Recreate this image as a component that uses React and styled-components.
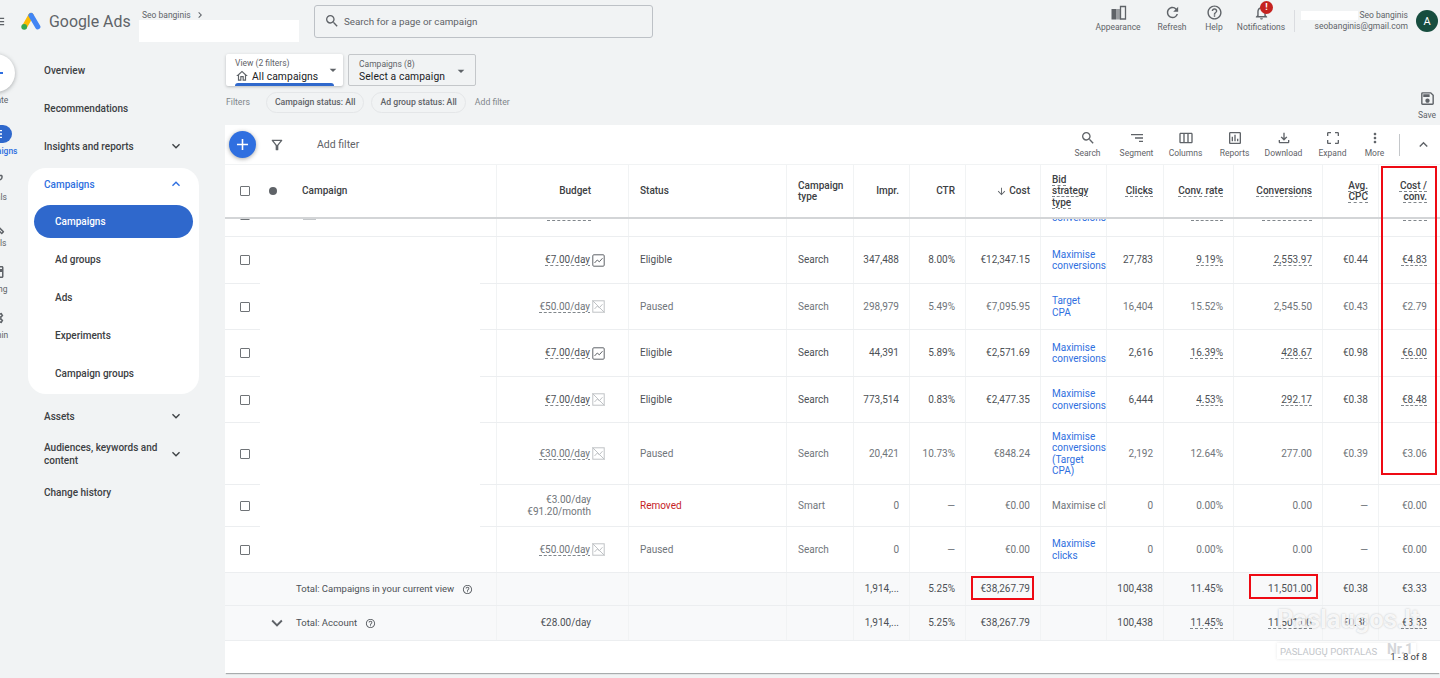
import React from 'react';
import styled, { createGlobalStyle } from 'styled-components';
import {
  MdMenu, MdChevronRight, MdSearch, MdRefresh, MdHelpOutline, MdOutlineNotifications, MdOutlineSave,
  MdOutlineFileDownload, MdMoreVert, MdOutlineCropFree, MdOutlineViewWeek, MdOutlineAssessment, MdSort,
  MdExpandMore, MdExpandLess, MdAdd, MdArrowDownward, MdOutlineHome, MdArrowDropDown, MdOutlineFilterAlt,
  MdOutlineEmojiEvents, MdOutlineBuild, MdOutlineCreditCard, MdOutlineSettings,
} from 'react-icons/md';

const GlobalStyle = createGlobalStyle`
  html, body { margin: 0; padding: 0; height: 100%; background: #f1f3f4; }
  body { font-family: Roboto, "Liberation Sans", sans-serif; color: #3c4043; overflow: hidden; }
  * { box-sizing: border-box; }
`;

const COLUMNS = '272px 132px 158px 67px 56px 56px 75px 66px 57px 70px 89px 56px 61px';

const rows = [
  { h: 47, budget: '€7.00/day', trend: true, status: 'Eligible', imp: '347,488', ctr: '8.00%', cost: '€12,347.15', bid: ['Maximise', 'conversions'], clicks: '27,783', rate: '9.19%', conv: '2,553.97', cpc: '€0.44', cc: '€4.83', dashed: true },
  { h: 46, budget: '€50.00/day', status: 'Paused', muted: true, imp: '298,979', ctr: '5.49%', cost: '€7,095.95', bid: ['Target', 'CPA'], clicks: '16,404', rate: '15.52%', conv: '2,545.50', cpc: '€0.43', cc: '€2.79' },
  { h: 47, budget: '€7.00/day', trend: true, status: 'Eligible', imp: '44,391', ctr: '5.89%', cost: '€2,571.69', bid: ['Maximise', 'conversions'], clicks: '2,616', rate: '16.39%', conv: '428.67', cpc: '€0.98', cc: '€6.00', dashed: true },
  { h: 46, budget: '€7.00/day', status: 'Eligible', imp: '773,514', ctr: '0.83%', cost: '€2,477.35', bid: ['Maximise', 'conversions'], clicks: '6,444', rate: '4.53%', conv: '292.17', cpc: '€0.38', cc: '€8.48', dashed: true },
  { h: 62, budget: '€30.00/day', status: 'Paused', muted: true, imp: '20,421', ctr: '10.73%', cost: '€848.24', bid: ['Maximise', 'conversions', '(Target', 'CPA)'], clicks: '2,192', rate: '12.64%', conv: '277.00', cpc: '€0.39', cc: '€3.06' },
  { h: 42, smart: true, status: 'Removed', muted: true, type: 'Smart', imp: '0', ctr: '—', cost: '€0.00', plainBid: 'Maximise clicks', clicks: '0', rate: '0.00%', conv: '0.00', cpc: '—', cc: '€0.00' },
  { h: 46, budget: '€50.00/day', status: 'Paused', muted: true, last: true, imp: '0', ctr: '—', cost: '€0.00', bid: ['Maximise', 'clicks'], clicks: '0', rate: '0.00%', conv: '0.00', cpc: '—', cc: '€0.00' },
];

const Page = styled.div`
  width: 1440px;
  height: 678px;
  overflow: hidden;
  display: flex;
  flex-direction: column;
`;

const TopBar = styled.header`
  height: 42px;
  flex: none;
  display: flex;
  align-items: center;
`;

const Burger = styled.div`
  width: 21px;
  display: flex;
  justify-content: flex-end;
  overflow: hidden;
  color: #5f6368;
  font-size: 15px;
  svg { flex: none; margin-right: 15px; }
`;

const Brand = styled.div`
  font-size: 15.9px;
  color: #5f6368;
  margin-left: 8px;
  width: 90px;
  white-space: nowrap;
`;

const AccountCrumb = styled.div`
  width: 175px;
  height: 42px;
  padding-top: 10px;
  font-size: 8.5px;
  color: #5f6368;
  display: flex;
  flex-direction: column;
`;

const CrumbName = styled.div`
  display: flex;
  align-items: center;
  gap: 3px;
  padding-left: 3px;
  height: 10px;
`;

const Redacted = styled.div`
  background: #fff;
  width: ${(p) => p.$w}px;
  height: ${(p) => p.$h}px;
  flex: none;
`;

const SearchBox = styled.div`
  width: 339px;
  height: 33px;
  border: 1px solid #bdc1c6;
  border-radius: 3px;
  display: flex;
  align-items: center;
  gap: 4px;
  padding-left: 9px;
  font-size: 9.8px;
  color: #5f6368;
  svg { font-size: 16px; }
`;

const TopActions = styled.div`
  margin-left: auto;
  display: flex;
  align-items: center;
  height: 42px;
`;

const TopAction = styled.div`
  width: ${(p) => p.$w}px;
  display: flex;
  flex-direction: column;
  align-items: center;
  font-size: 8.5px;
  color: #5f6368;
  gap: 1px;
  position: relative;
  margin-bottom: 6px;
  white-space: nowrap;
  svg { font-size: 17px; display: block; }
`;

const AlertBadge = styled.span`
  position: absolute;
  top: -3px;
  left: 26px;
  width: 13px;
  height: 13px;
  border-radius: 50%;
  background: #c5221f;
  color: #fff;
  font-size: 9px;
  font-weight: 700;
  text-align: center;
  line-height: 13px;
`;

const TopDivider = styled.div`
  width: 1px;
  height: 22px;
  background: #dadce0;
  margin-left: 6px;
`;

const UserBlock = styled.div`
  width: 113px;
  font-size: 8.5px;
  color: #5f6368;
  text-align: right;
  line-height: 11px;
`;

const UserLine = styled.div`
  display: flex;
  justify-content: flex-end;
  align-items: center;
  gap: 1px;
`;

const Avatar = styled.div`
  width: 22px;
  height: 22px;
  border-radius: 50%;
  background: #174d3f;
  color: #fff;
  font-size: 11px;
  display: flex;
  align-items: center;
  justify-content: center;
  margin: 0 2px 0 8px;
`;

const Body = styled.div`
  flex: 1;
  display: flex;
  min-height: 0;
`;

const Rail = styled.nav`
  width: 28px;
  flex: none;
  overflow: hidden;
  display: flex;
  flex-direction: column;
`;

const RailColumn = styled.div`
  width: 60px;
  margin-left: -34px;
  display: flex;
  flex-direction: column;
  align-items: center;
  padding-top: 12px;
`;

const CreateCircle = styled.div`
  width: 38px;
  height: 38px;
  border-radius: 50%;
  background: #fff;
  box-shadow: 0 1px 4px rgba(60, 64, 67, 0.4);
  color: #2f6fe0;
  font-size: 24px;
  display: flex;
  align-items: center;
  justify-content: center;
`;

const RailLabel = styled.div`
  font-size: 8.5px;
  font-weight: ${(p) => (p.$active ? 500 : 400)};
  color: ${(p) => (p.$active ? '#2f6fe0' : '#5f6368')};
  line-height: 10px;
  margin-top: 3px;
  white-space: nowrap;
`;

const RailItem = styled.div`
  height: 46px;
  display: flex;
  flex-direction: column;
  align-items: center;
  color: #5f6368;
  font-size: 18px;
  svg { display: block; }
`;

const RailPill = styled.div`
  width: 32px;
  height: 18px;
  border-radius: 9px;
  background: #2f68cc;
  color: #fff;
  font-size: 16px;
  display: flex;
  align-items: center;
  justify-content: center;
`;

const CreateItem = styled.div`
  height: 71px;
  display: flex;
  flex-direction: column;
  align-items: center;
`;

const SideNav = styled.nav`
  width: 171px;
  flex: none;
  padding-top: 9px;
`;

const NavItem = styled.div`
  height: 38px;
  display: flex;
  align-items: center;
  justify-content: space-between;
  padding: 0 15px 0 16px;
  font-size: 10px;
  font-weight: 500;
  line-height: 13px;
  color: #3c4043;
  svg { font-size: 16px; flex: none; color: #3c4043; }
`;

const NavCard = styled.div`
  background: #fff;
  border-radius: 18px;
  margin: 3px 0;
  padding: 0 6px;
  height: 226px;
`;

const NavCardHead = styled.div`
  height: 32px;
  display: flex;
  align-items: center;
  justify-content: space-between;
  padding: 0 9px 0 10px;
  font-size: 10px;
  font-weight: 500;
  color: #2f6fe0;
  svg { font-size: 16px; }
`;

const NavPill = styled.div`
  height: 33px;
  margin-top: 5px;
  margin-bottom: 2px;
  border-radius: 17px;
  background: #2f68cc;
  color: #fff;
  font-size: 10px;
  font-weight: 500;
  display: flex;
  align-items: center;
  padding-left: 21px;
`;

const NavSub = styled.div`
  height: 38px;
  display: flex;
  align-items: center;
  padding-left: 21px;
  font-size: 10px;
  font-weight: 500;
  color: #3c4043;
`;

const Main = styled.main`
  width: 1215px;
  margin-left: 26px;
  flex: none;
  position: relative;
  padding-top: 12px;
`;

const SelectorRow = styled.div`
  display: flex;
  gap: 5px;
  height: 32px;
`;

const Selector = styled.div`
  position: relative;
  width: ${(p) => p.$w}px;
  margin-left: ${(p) => p.$ml || 0}px;
  height: 32px;
  border-radius: 2px;
  padding: 4px 0 0 ${(p) => p.$pl}px;
  background: ${(p) => (p.$raised ? '#fff' : '#f1f3f4')};
  border: ${(p) => (p.$raised ? 'none' : '1px solid #c4c7ca')};
  box-shadow: ${(p) => (p.$raised ? '0 1px 3px rgba(60, 64, 67, 0.3)' : 'none')};
`;

const SelectorLabel = styled.div`
  font-size: 8.5px;
  color: #5f6368;
  line-height: 10px;
`;

const SelectorValue = styled.div`
  font-size: 10.3px;
  color: #202124;
  line-height: 13px;
  margin-top: 1px;
  display: flex;
  align-items: center;
  gap: 3px;
  letter-spacing: 0.1px;
  svg { font-size: 14px; color: #5f6368; }
`;

const SelectorArrow = styled.div`
  position: absolute;
  right: ${(p) => p.$r}px;
  top: 8px;
  font-size: 16px;
  color: #5f6368;
  svg { display: block; }
`;

const ActiveBar = styled.div`
  position: absolute;
  left: 9px;
  right: 9px;
  bottom: 0;
  height: 3px;
  border-radius: 3px 3px 0 0;
  background: #2f68cc;
`;

const FilterRow = styled.div`
  height: 39px;
  padding: 6px 0 0 1px;
  display: flex;
  align-items: flex-start;
  font-size: 8.7px;
  color: #80868b;
`;

const FilterLabel = styled.span`
  line-height: 21px;
  margin-right: 16px;
`;

const Chip = styled.span`
  height: 21px;
  line-height: 19px;
  padding: 0 8px;
  border: 1px solid #e4e6e8;
  border-radius: 11px;
  font-weight: 500;
  color: #5f6368;
  margin-right: 7px;
  white-space: nowrap;
`;

const AddFilterText = styled.span`
  line-height: 21px;
  margin-left: 2px;
`;

const SaveAction = styled.div`
  margin-left: auto;
  margin-top: -2px;
  width: 26px;
  display: flex;
  flex-direction: column;
  align-items: center;
  font-size: 8.5px;
  color: #5f6368;
  svg { font-size: 17px; display: block; margin-bottom: 3px; }
`;

const Card = styled.section`
  background: #fff;
  height: 548px;
  box-shadow: 0 2px 1px -1px rgba(60, 64, 67, 0.4);
`;

const Toolbar = styled.div`
  height: 39px;
  display: flex;
  align-items: center;
  position: relative;
`;

const Fab = styled.div`
  width: 27px;
  height: 27px;
  margin-left: 4px;
  border-radius: 50%;
  background: #2f6fe0;
  color: #fff;
  font-size: 19px;
  display: flex;
  align-items: center;
  justify-content: center;
  box-shadow: 0 1px 4px rgba(60, 64, 67, 0.45);
`;

const FilterIcon = styled.div`
  margin-left: 13px;
  font-size: 16px;
  color: #5f6368;
  display: flex;
`;

const AddFilter = styled.div`
  margin-left: 32px;
  font-size: 10.5px;
  color: #5f6368;
`;

const ToolGroup = styled.div`
  margin-left: auto;
  display: flex;
  align-items: center;
`;

const Tool = styled.div`
  width: ${(p) => p.$w || 49}px;
  display: flex;
  flex-direction: column;
  align-items: center;
  font-size: 8.5px;
  color: #5f6368;
  margin-bottom: 2px;
  svg { font-size: 16px; display: block; margin-bottom: 2px; }
`;

const SegmentIcon = styled(MdSort)`
  transform: scaleX(-1);
`;

const ToolDivider = styled.div`
  width: 1px;
  height: 22px;
  background: #c4c7ca;
  margin: 0 15px 0 7px;
`;

const CollapseIcon = styled.div`
  width: 20px;
  margin-right: 5px;
  font-size: 17px;
  color: #5f6368;
  display: flex;
`;

const Row = styled.div`
  display: grid;
  grid-template-columns: ${COLUMNS};
  height: ${(p) => p.$h}px;
  background: ${(p) => (p.$total ? '#f8f9fa' : '#fff')};
  border-bottom: 1px solid #eceef0;
  color: ${(p) => (p.$muted ? '#70757a' : '#4d5156')};
  font-size: 10px;
  line-height: 11.5px;
`;

const HeaderRow = styled(Row)`
  position: relative;
  z-index: 1;
  border-top: 1px solid #f1f3f4;
  border-bottom: 2px solid #d3d5d7;
  color: #3c4043;
  font-weight: 500;
`;

const PeekRow = styled(Row)`
  overflow: hidden;
`;

const Cell = styled.div`
  display: flex;
  flex-direction: column;
  justify-content: center;
  align-items: ${(p) => (p.$left ? 'flex-start' : 'flex-end')};
  text-align: ${(p) => (p.$left ? 'left' : 'right')};
  padding: 0 ${(p) => p.$pr || 10}px 0 11px;
  border-right: 1px solid #f1f3f4;
  overflow: hidden;
  white-space: nowrap;
  &:last-child { border-right: none; }
`;

const PeekCell = styled(Cell)`
  justify-content: flex-start;
  margin-top: -7px;
  color: #2f6fe0;
`;

const PeekMarkCell = styled(Cell)`
  justify-content: flex-start;
  padding-right: ${(p) => p.$pr || 10}px;
`;

const PeekDash = styled.span`
  width: ${(p) => p.$w}px;
  height: 0;
  margin-top: 1px;
  border-top: 1px dashed #80868b;
`;

const CampaignCell = styled.div`
  position: relative;
  display: flex;
  align-items: center;
  border-right: 1px solid #f1f3f4;
  padding-left: 15px;
  white-space: nowrap;
  &::after {
    content: '';
    display: ${(p) => (p.$mask ? 'block' : 'none')};
    position: absolute;
    left: 35px;
    right: 16px;
    bottom: -1px;
    height: 1px;
    background: #fff;
  }
`;

const PeekCampaignCell = styled(CampaignCell)`
  align-items: flex-start;
`;

const Check = styled.span`
  width: 10px;
  height: 10px;
  flex: none;
  border: 1.2px solid #6f7377;
  border-radius: 1px;
`;

const PeekCheck = styled(Check)`
  margin-top: -9px;
`;

const PeekTitleEdge = styled.span`
  width: 13px;
  height: 1px;
  margin-left: 53px;
  background: #c4c7ca;
`;

const StatusDot = styled.span`
  width: 8px;
  height: 8px;
  flex: none;
  border-radius: 50%;
  background: #5f6368;
  margin-left: 19px;
`;

const CampaignTitle = styled.span`
  margin-left: 25px;
`;

const TotalLabel = styled.div`
  display: flex;
  align-items: center;
  margin-left: ${(p) => p.$ml}px;
  gap: 8px;
  font-size: 9.5px;
  svg { font-size: 11px; color: #5f6368; }
`;

const TotalChevron = styled.span`
  font-size: 22px;
  display: flex;
  margin-left: 26px;
  color: #5f6368;
`;

const Dashed = styled.span`
  text-decoration: underline dashed #80868b 1px;
  text-underline-offset: 2px;
`;

const BudgetCell = styled(Cell)`
  flex-direction: row;
  align-items: center;
  justify-content: flex-end;
  padding-right: 22px;
  gap: 2px;
`;

const BudgetText = styled.div`
  text-align: right;
  margin-right: 27px;
`;

const LinkText = styled.div`
  color: #2f6fe0;
`;

const RemovedText = styled.span`
  color: #c5221f;
`;

const SortArrow = styled.span`
  display: inline-flex;
  align-items: center;
  gap: 2px;
  svg { font-size: 11px; color: #5f6368; }
`;

const TrendSlot = styled.span`
  width: 14px;
  display: flex;
  flex: none;
`;

const TableFoot = styled.div`
  height: 32px;
  display: flex;
  justify-content: flex-end;
  align-items: flex-end;
  padding: 0 13px 11px 0;
  font-size: 9.5px;
  color: #3c4043;
  position: relative;
  z-index: 4;
`;

const RedBox = styled.div`
  position: absolute;
  left: ${(p) => p.$x}px;
  top: ${(p) => p.$y}px;
  width: ${(p) => p.$w}px;
  height: ${(p) => p.$h}px;
  border: 2px solid #ee0a14;
  z-index: 2;
`;

const Watermark = styled.div`
  position: absolute;
  left: 1052px;
  top: 562px;
  width: 139px;
  z-index: 3;
  pointer-events: none;
`;

const WatermarkName = styled.div`
  font-size: 25.5px;
  font-weight: 700;
  line-height: 30px;
  color: rgba(255, 255, 255, 0.85);
  text-shadow: 0 0 2px rgba(60, 64, 67, 0.3);
  white-space: nowrap;
`;

const WatermarkTag = styled.div`
  display: flex;
  align-items: flex-end;
  justify-content: space-between;
  height: 16px;
  padding: 0 3px;
  margin-top: 9px;
  background: rgba(255, 255, 255, 0.5);
  box-shadow: 0 0 3px rgba(60, 64, 67, 0.12);
  font-size: 9.6px;
  line-height: 15px;
  color: #c3c6ca;
  white-space: nowrap;
`;

const WatermarkNr = styled.span`
  font-size: 14px;
  font-weight: 700;
  line-height: 20px;
  color: #d4d6d9;
`;

function AdsLogo() {
  return (
    <svg width="20" height="18" viewBox="0 0 20 18">
      <line x1="10" y1="3.4" x2="3.6" y2="14.6" stroke="#fbbc04" strokeWidth="5.2" strokeLinecap="round" />
      <line x1="10" y1="3.4" x2="16.8" y2="14.8" stroke="#4285f4" strokeWidth="5.2" strokeLinecap="round" />
      <circle cx="3.2" cy="14.8" r="2.9" fill="#34a853" />
    </svg>
  );
}

function AppearanceIcon() {
  return (
    <svg width="17" height="17" viewBox="0 0 17 17">
      <rect x="1.500" y="5" width="4.500" height="10.500" fill="#5f6368" />
      <rect x="6" y="5" width="4.500" height="10.500" fill="#9a9da1" />
      <path d="M10.500 2.500h5v12.500h-5z" fill="none" stroke="#5f6368" strokeWidth="1.300" />
    </svg>
  );
}

function TrendIcon() {
  return (
    <svg width="13" height="13" viewBox="0 0 13 13" fill="none" stroke="#5f6368" strokeWidth="1">
      <rect x="0.8" y="0.8" width="11.400" height="11.400" rx="1" />
      <path d="M2.500 9l2.800-3 2 1.800 3.200-3.600" />
    </svg>
  );
}

function NoTrendIcon() {
  return (
    <svg width="13" height="13" viewBox="0 0 13 13" fill="none" stroke="#bfc2c5" strokeWidth="1">
      <rect x="0.8" y="0.8" width="11.400" height="11.400" />
      <path d="M0.500 0.500l12 12M2.500 9l2.800-3 2 1.800 3.200-3.600" />
    </svg>
  );
}

function HeadDashed({ lines }) {
  return lines.map((line) => (
    <div key={line}><Dashed>{line}</Dashed></div>
  ));
}

function MaybeDashed({ on, children }) {
  return on ? <Dashed>{children}</Dashed> : <span>{children}</span>;
}

function CampaignRow({ data }) {
  return (
    <Row $h={data.h} $muted={data.muted}>
      <CampaignCell $mask={!data.last}>
        <Check />
      </CampaignCell>
      {data.smart ? (
        <Cell>
          <BudgetText>
            <div>€3.00/day</div>
            <div>€91.20/month</div>
          </BudgetText>
        </Cell>
      ) : (
        <BudgetCell>
          <Dashed>{data.budget}</Dashed>
          <TrendSlot>{data.trend ? <TrendIcon /> : <NoTrendIcon />}</TrendSlot>
        </BudgetCell>
      )}
      <Cell $left>
        {data.status === 'Removed' ? <RemovedText>Removed</RemovedText> : <span>{data.status}</span>}
      </Cell>
      <Cell $left>{data.type || 'Search'}</Cell>
      <Cell>{data.imp}</Cell>
      <Cell>{data.ctr}</Cell>
      <Cell>{data.cost}</Cell>
      <Cell $left>
        {data.plainBid ? (
          <span>{data.plainBid}</span>
        ) : (
          data.bid.map((line) => <LinkText key={line}>{line}</LinkText>)
        )}
      </Cell>
      <Cell>{data.clicks}</Cell>
      <Cell><MaybeDashed on={data.dashed}>{data.rate}</MaybeDashed></Cell>
      <Cell><MaybeDashed on={data.dashed}>{data.conv}</MaybeDashed></Cell>
      <Cell>{data.cpc}</Cell>
      <Cell $pr={13}><MaybeDashed on={data.dashed}>{data.cc}</MaybeDashed></Cell>
    </Row>
  );
}

function TotalRow({ h, first, budget, account }) {
  return (
    <Row $h={h} $total>
      <CampaignCell>{first}</CampaignCell>
      <Cell><BudgetText>{budget}</BudgetText></Cell>
      <Cell $left />
      <Cell $left />
      <Cell>1,914,...</Cell>
      <Cell>5.25%</Cell>
      <Cell>€38,267.79</Cell>
      <Cell $left />
      <Cell>100,438</Cell>
      <Cell><MaybeDashed on={account}>11.45%</MaybeDashed></Cell>
      <Cell><MaybeDashed on={account}>11,501.00</MaybeDashed></Cell>
      <Cell>€0.38</Cell>
      <Cell $pr={13}><MaybeDashed on={account}>€3.33</MaybeDashed></Cell>
    </Row>
  );
}

export default function App() {
  return (
    <Page>
      <GlobalStyle />
      <TopBar>
        <Burger><MdMenu /></Burger>
        <AdsLogo />
        <Brand>Google Ads</Brand>
        <AccountCrumb>
          <CrumbName>Seo banginis <MdChevronRight size={12} /></CrumbName>
          <Redacted $w={160} $h={22} />
        </AccountCrumb>
        <SearchBox>
          <MdSearch />
          Search for a page or campaign
        </SearchBox>
        <TopActions>
          <TopAction $w={64}><AppearanceIcon />Appearance</TopAction>
          <TopAction $w={44}><MdRefresh />Refresh</TopAction>
          <TopAction $w={40}><MdHelpOutline />Help</TopAction>
          <TopAction $w={54}>
            <MdOutlineNotifications />
            <AlertBadge>!</AlertBadge>
            Notifications
          </TopAction>
          <TopDivider />
          <UserBlock>
            <UserLine><Redacted $w={57} $h={9} />Seo banginis</UserLine>
            <div>seobanginis@gmail.com</div>
          </UserBlock>
          <Avatar>A</Avatar>
        </TopActions>
      </TopBar>

      <Body>
        <Rail>
          <RailColumn>
            <CreateItem>
              <CreateCircle><MdAdd /></CreateCircle>
              <RailLabel>Create</RailLabel>
            </CreateItem>
            <RailItem>
              <RailPill><MdMenu /></RailPill>
              <RailLabel $active>Campaigns</RailLabel>
            </RailItem>
            <RailItem><MdOutlineEmojiEvents /><RailLabel>Goals</RailLabel></RailItem>
            <RailItem><MdOutlineBuild /><RailLabel>Tools</RailLabel></RailItem>
            <RailItem><MdOutlineCreditCard /><RailLabel>Billing</RailLabel></RailItem>
            <RailItem><MdOutlineSettings /><RailLabel>Admin</RailLabel></RailItem>
          </RailColumn>
        </Rail>

        <SideNav>
          <NavItem>Overview</NavItem>
          <NavItem>Recommendations</NavItem>
          <NavItem>Insights and reports <MdExpandMore /></NavItem>
          <NavCard>
            <NavCardHead>Campaigns <MdExpandLess /></NavCardHead>
            <NavPill>Campaigns</NavPill>
            <NavSub>Ad groups</NavSub>
            <NavSub>Ads</NavSub>
            <NavSub>Experiments</NavSub>
            <NavSub>Campaign groups</NavSub>
          </NavCard>
          <NavItem>Assets <MdExpandMore /></NavItem>
          <NavItem><span>Audiences, keywords and<br />content</span> <MdExpandMore /></NavItem>
          <NavItem>Change history</NavItem>
        </SideNav>

        <Main>
          <SelectorRow>
            <Selector $raised $w={117} $ml={1} $pl={9}>
              <SelectorLabel>View (2 filters)</SelectorLabel>
              <SelectorValue><MdOutlineHome />All campaigns</SelectorValue>
              <SelectorArrow $r={2}><MdArrowDropDown /></SelectorArrow>
              <ActiveBar />
            </Selector>
            <Selector $w={128} $pl={10}>
              <SelectorLabel>Campaigns (8)</SelectorLabel>
              <SelectorValue>Select a campaign</SelectorValue>
              <SelectorArrow $r={6}><MdArrowDropDown /></SelectorArrow>
            </Selector>
          </SelectorRow>
          <FilterRow>
            <FilterLabel>Filters</FilterLabel>
            <Chip>Campaign status: All</Chip>
            <Chip>Ad group status: All</Chip>
            <AddFilterText>Add filter</AddFilterText>
            <SaveAction><MdOutlineSave />Save</SaveAction>
          </FilterRow>

          <Card>
            <Toolbar>
              <Fab><MdAdd /></Fab>
              <FilterIcon><MdOutlineFilterAlt /></FilterIcon>
              <AddFilter>Add filter</AddFilter>
              <ToolGroup>
                <Tool><MdSearch />Search</Tool>
                <Tool><SegmentIcon />Segment</Tool>
                <Tool><MdOutlineViewWeek />Columns</Tool>
                <Tool><MdOutlineAssessment />Reports</Tool>
                <Tool><MdOutlineFileDownload />Download</Tool>
                <Tool><MdOutlineCropFree />Expand</Tool>
                <Tool $w={35}><MdMoreVert />More</Tool>
                <ToolDivider />
                <CollapseIcon><MdExpandLess /></CollapseIcon>
              </ToolGroup>
            </Toolbar>

            <HeaderRow $h={55}>
              <CampaignCell>
                <Check />
                <StatusDot />
                <CampaignTitle>Campaign</CampaignTitle>
              </CampaignCell>
              <Cell><BudgetText>Budget</BudgetText></Cell>
              <Cell $left>Status</Cell>
              <Cell $left><div>Campaign</div><div>type</div></Cell>
              <Cell>Impr.</Cell>
              <Cell>CTR</Cell>
              <Cell><SortArrow><MdArrowDownward />Cost</SortArrow></Cell>
              <Cell $left><HeadDashed lines={['Bid', 'strategy', 'type']} /></Cell>
              <Cell><Dashed>Clicks</Dashed></Cell>
              <Cell><Dashed>Conv. rate</Dashed></Cell>
              <Cell><Dashed>Conversions</Dashed></Cell>
              <Cell><HeadDashed lines={['Avg.', 'CPC']} /></Cell>
              <Cell $pr={13}><HeadDashed lines={['Cost /', 'conv.']} /></Cell>
            </HeaderRow>

            <PeekRow $h={18}>
              <PeekCampaignCell $mask>
                <PeekCheck />
                <PeekTitleEdge />
              </PeekCampaignCell>
              <PeekMarkCell $pr={37}><PeekDash $w={44} /></PeekMarkCell>
              <Cell $left />
              <Cell $left />
              <Cell />
              <Cell />
              <Cell />
              <PeekCell $left>conversions</PeekCell>
              <Cell />
              <PeekMarkCell><PeekDash $w={32} /></PeekMarkCell>
              <PeekMarkCell><PeekDash $w={50} /></PeekMarkCell>
              <Cell />
              <PeekMarkCell $pr={13}><PeekDash $w={24} /></PeekMarkCell>
            </PeekRow>

            {rows.map((row) => <CampaignRow key={row.cost + row.budget + row.imp} data={row} />)}

            <TotalRow
              h={33}
              budget=""
              first={<TotalLabel $ml={56}>Total: Campaigns in your current view <MdHelpOutline /></TotalLabel>}
            />
            <TotalRow
              h={35}
              account
              budget="€28.00/day"
              first={
                <>
                  <TotalChevron><MdExpandMore /></TotalChevron>
                  <TotalLabel $ml={8}>Total: Account <MdHelpOutline /></TotalLabel>
                </>
              }
            />
            <TableFoot>1 - 8 of 8</TableFoot>
          </Card>

          <RedBox $x={1156} $y={124} $w={56} $h={309} />
          <RedBox $x={746} $y={534} $w={63} $h={24} />
          <RedBox $x={1024} $y={532} $w={69} $h={25} />
          <Watermark>
            <WatermarkName>Paslaugos.lt</WatermarkName>
            <WatermarkTag>PASLAUGŲ PORTALAS <WatermarkNr>Nr.1</WatermarkNr></WatermarkTag>
          </Watermark>
        </Main>
      </Body>
    </Page>
  );
}
